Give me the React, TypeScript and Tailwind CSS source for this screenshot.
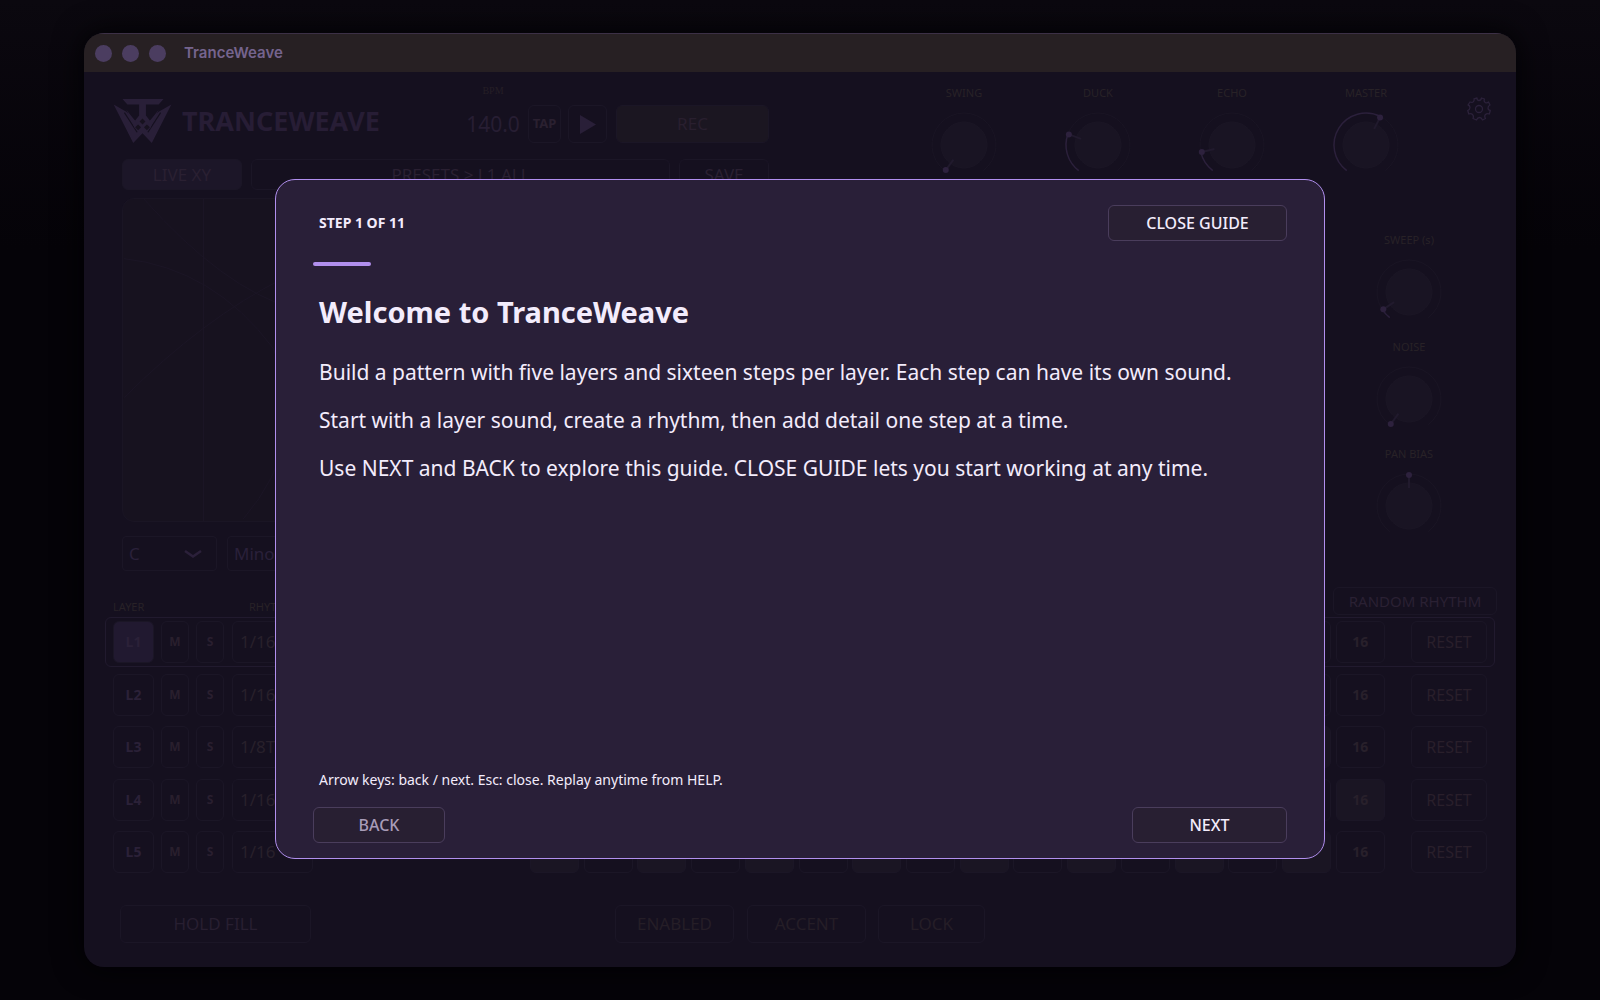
import React, { useEffect, useState } from "react";

const TOTAL_STEPS = 11;

const topKnobs = [
  { label: "SWING", angle: -144 },
  { label: "DUCK", angle: -70 },
  { label: "ECHO", angle: -103 },
  { label: "MASTER", angle: 27 },
];

const sideKnobs = [
  { label: "SWEEP (s)", angle: -124 },
  { label: "NOISE", angle: -144 },
  { label: "PAN BIAS", angle: 0, bipolar: true },
];

const layers = [
  { name: "L1", rate: "1/16", filled: [1, 5, 9, 13] },
  { name: "L2", rate: "1/16", filled: [5, 13] },
  { name: "L3", rate: "1/8T", filled: [3, 7, 11, 15] },
  { name: "L4", rate: "1/16", filled: [4, 8, 12, 16] },
  { name: "L5", rate: "1/16", filled: [1, 3, 5, 7, 9, 11, 13, 15] },
];

const steps = Array.from({ length: 16 }, (_, i) => i + 1);

const point = (angle: number, radius: number) => {
  const rad = ((angle - 90) * Math.PI) / 180;
  return { x: 36 + radius * Math.cos(rad), y: 36 + radius * Math.sin(rad) };
};

const arc = (from: number, to: number, radius: number) => {
  const a = point(from, radius);
  const b = point(to, radius);
  const large = to - from > 180 ? 1 : 0;
  return `M${a.x} ${a.y}A${radius} ${radius} 0 ${large} 1 ${b.x} ${b.y}`;
};

const Knob = ({
  label,
  angle,
  bipolar,
}: {
  label: string;
  angle: number;
  bipolar?: boolean;
}) => {
  const dot = point(angle, 31);
  const inner = point(angle, 18);
  return (
    <div className="flex w-[134px] flex-col items-center gap-[9px]">
      <span className="text-[11px] leading-[14px] text-[#282227]">{label}</span>
      <svg className="size-[72px]" viewBox="0 0 72 72" fill="none">
        <path d={arc(-143, 143, 32)} stroke="#1a1524" />
        <circle cx="36" cy="36" r="23" fill="#191423" stroke="#1b1625" />
        {!bipolar && angle > -143 && (
          <path d={arc(-143, angle, 32)} stroke="#2b203b" strokeWidth="1.5" />
        )}
        <path
          d={`M${inner.x} ${inner.y}L${dot.x} ${dot.y}`}
          stroke="#211a2d"
          strokeWidth="2"
        />
        <circle cx={dot.x} cy={dot.y} r="3" fill="#2d213d" />
      </svg>
    </div>
  );
};

const Logo = () => (
  <svg className="h-11 w-[60px]" viewBox="0 0 60 45" fill="#291f38">
    <path d="M9 0H51L46 5.500H33V17L37 22L46 13L59 5.500L39 45L29.500 35L20 45L0 5.500L13 13L22 22L26 17V5.500H14Z" />
    <path
      d="M11 14L24 34M48 14L35 34"
      stroke="#15101f"
      strokeWidth="1.200"
    />
    <path d="M13 11L24 25L22 31Z M46 11L35 25L37 31Z" />
    <path
      d="M29.500 20L32.500 23L29.500 26L26.500 23Z M25 26L28 29L25 32L22 29Z M34 26L37 29L34 32L31 29Z"
      fill="#17121f"
    />
  </svg>
);

const Gear = () => (
  <svg
    className="size-6"
    viewBox="0 0 24 24"
    fill="none"
    stroke="#2b213a"
    strokeWidth="1.300"
    strokeLinejoin="round"
  >
    <circle cx="12" cy="12" r="3.500" />
    <path d="M10 1Q10 3.500 12 3.500T14.500 1L17.500 2Q16.500 4.500 18.200 5.500T21.500 5L23 8Q21 9 21 11T23.300 13.500L22.300 17Q20 16 18.500 17.500T18.500 21.500L15.500 23Q14.500 20.500 12.500 20.500T9.500 23L6 21.500Q7 19 5.500 17.500T1.800 17L.7 13.500Q3 12.500 3 10.500T1 8L3 5Q5.500 6 6.500 4.500T7 1.800Z" />
  </svg>
);

const Chevron = () => (
  <svg className="h-2 w-[18px]" viewBox="0 0 18 8" fill="none">
    <path d="M1 1L9 6.500L17 1" stroke="#2b203a" strokeWidth="2.500" />
  </svg>
);

const box = "rounded-md border border-[#1b1626]";

const Header = () => (
  <div className="flex justify-between">
    {/* Transport, presets and XY pad */}
    <div className="w-[656px] shrink-0 pt-3">
      <div className="flex items-end">
        <Logo />
        <h1 className="ml-[9px] text-[27px] leading-[44px] font-bold text-[#271d35]">
          TRANCEWEAVE
        </h1>
        <div className="ml-auto flex w-[52px] flex-col items-center gap-[7px]">
          <span className="font-['Liberation_Serif',serif] text-[10px] leading-[14px] text-[#251f26]">
            BPM
          </span>
          <span className="text-[21px] leading-[38px] text-[#271e33]">
            140.0
          </span>
        </div>
        <button
          className={`${box} ml-[9px] h-[38px] w-[33px] text-[13px] font-bold text-[#2a2030]`}
        >
          TAP
        </button>
        <button
          aria-label="Play"
          className={`${box} ml-[7px] flex h-[38px] w-[39px] items-center justify-center`}
        >
          <svg className="h-[19px] w-4" viewBox="0 0 16 19" fill="#291f38">
            <path d="M0 0L16 9.500L0 19Z" />
          </svg>
        </button>
        <button
          className={`${box} ml-[9px] h-[38px] w-[153px] bg-[#1b1621] text-[17px] text-[#291f2f]`}
        >
          REC
        </button>
      </div>

      <div className="mt-4 flex gap-[9px] pl-[9px] text-[17px] text-[#2a2032]">
        <button className={`${box} h-[31px] w-[120px] bg-[#1c1628]`}>
          LIVE XY
        </button>
        <button className={`${box} h-[31px] flex-1`}>
          PRESETS &gt; L1 ALL
        </button>
        <button className={`${box} h-[31px] w-[90px]`}>SAVE</button>
      </div>

      <div className="mt-2 ml-[9px] h-[324px] overflow-hidden rounded-xl border border-[#1a1524] bg-[#17121f]">
        <svg className="h-full w-full" viewBox="0 0 647 324" fill="none" stroke="#1b1525">
          <path d="M0 60Q90 70 150 150Q190 240 120 322M20 0Q100 90 170 110M80 0V324M0 200Q80 120 160 80" />
        </svg>
      </div>

      <div className="mt-[14px] flex gap-[10px] pl-[9px] text-[17px] text-[#2a203a]">
        <button
          className={`${box} flex h-[35px] w-[95px] items-center justify-between rounded-sm pr-[14px] pl-[6px]`}
        >
          C <Chevron />
        </button>
        <button
          className={`${box} flex h-[35px] w-[150px] items-center justify-between rounded-sm px-[6px]`}
        >
          Minor <Chevron />
        </button>
      </div>
    </div>

    {/* Knobs */}
    <div className="flex flex-col items-end pt-[14px]">
      <div className="flex">
        {topKnobs.map((knob) => (
          <Knob key={knob.label} {...knob} />
        ))}
        <button aria-label="Settings" className="mt-[11px] ml-[34px] size-6">
          <Gear />
        </button>
      </div>
      <div className="mt-[52px] mr-[15px] flex flex-col gap-3">
        {sideKnobs.map((knob) => (
          <Knob key={knob.label} {...knob} />
        ))}
      </div>
    </div>
  </div>
);

const Sequencer = () => (
  <div className="mt-4">
    <div className="-mr-[6px] flex h-7 items-end text-[11px] leading-4 text-[#282227]">
      <span className="w-[136px]">LAYER</span>
      <span>RHYTHM</span>
      <button
        className={`${box} ml-auto h-7 w-[164px] text-[15px] text-[#2a2033]`}
      >
        RANDOM RHYTHM
      </button>
    </div>

    <div className="mt-[2px] -mr-1 -ml-2 flex h-[260px] flex-col justify-between">
      {layers.map((layer, index) => (
        <div
          key={layer.name}
          className={`flex h-[50px] items-center rounded-md border px-[7px] font-bold ${
            index === 0 ? "border-[#211a2e]" : "border-transparent"
          }`}
        >
          <button
            className={`${box} h-[42px] w-[41px] rounded-lg text-sm text-[#2b2138] ${
              index === 0 ? "bg-[#211930]" : ""
            }`}
          >
            {layer.name}
          </button>
          <button
            className={`${box} ml-[7px] h-[42px] w-7 rounded-lg text-xs text-[#291f2d]`}
          >
            M
          </button>
          <button
            className={`${box} ml-[7px] h-[42px] w-7 rounded-lg text-xs text-[#291f2f]`}
          >
            S
          </button>
          <button
            className={`${box} ml-2 h-[42px] w-[81px] pl-[7px] text-left text-[17px] font-normal text-[#28202b]`}
          >
            {layer.rate}
          </button>
          <div className="ml-auto flex w-[855px] justify-between">
            {steps.map((step) => (
              <button
                key={step}
                aria-label={`${layer.name} step ${step}`}
                className={`${box} h-[42px] w-[49px] text-sm text-[#28202b] ${
                  layer.filled.includes(step) ? "bg-[#1a1523]" : ""
                }`}
              >
                {step === 16 ? step : null}
              </button>
            ))}
          </div>
          <button
            className={`${box} ml-[26px] h-[42px] w-[76px] text-base font-normal text-[#291f2b]`}
          >
            RESET
          </button>
        </div>
      ))}
    </div>
  </div>
);

const Footer = () => (
  <div className="mt-7 flex h-[38px] pl-[7px] text-[17px] text-[#251e27]">
    <button className={`${box} w-[191px] text-[#281f31]`}>HOLD FILL</button>
    <button className={`${box} ml-[304px] w-[119px]`}>ENABLED</button>
    <button className={`${box} ml-[13px] w-[119px]`}>ACCENT</button>
    <button className={`${box} ml-3 w-[107px]`}>LOCK</button>
  </div>
);

const guideButton =
  "h-9 rounded-md border border-[#4a3d5c] bg-[#281f32] text-base font-medium text-[#f3ecfc] disabled:text-[#a89cb8]";

const Guide = ({ onClose }: { onClose: () => void }) => {
  const [step, setStep] = useState(1);

  // the bar starts at 6% and is full on the last step
  const progress = 6 + ((step - 1) / (TOTAL_STEPS - 1)) * 94;

  useEffect(() => {
    const onKey = (e: KeyboardEvent) => {
      if (e.key === "Escape") onClose();
      if (e.key === "ArrowRight") setStep((s) => Math.min(TOTAL_STEPS, s + 1));
      if (e.key === "ArrowLeft") setStep((s) => Math.max(1, s - 1));
    };
    window.addEventListener("keydown", onKey);
    return () => window.removeEventListener("keydown", onKey);
  }, [onClose]);

  return (
    <div
      role="dialog"
      aria-labelledby="guide-title"
      className="absolute inset-x-[191px] top-[146px] bottom-[108px] flex flex-col rounded-[20px] border border-[#b18fee] bg-[#291f38] px-[37px] pt-[25px] pb-[15px] text-[#f3ecfc]"
    >
      <div className="flex items-center justify-between">
        <span className="pl-[6px] text-sm font-bold">
          STEP {step} OF {TOTAL_STEPS}
        </span>
        <button onClick={onClose} className={`${guideButton} w-[179px]`}>
          CLOSE GUIDE
        </button>
      </div>

      <div className="mt-[21px] h-1">
        <div
          className="h-1 rounded-full bg-[#b18fee]"
          style={{ width: `${progress}%` }}
        />
      </div>

      <div className="flex-1 pl-[6px]">
        <h2 id="guide-title" className="mt-6 text-[29px] leading-[44px] font-bold">
          Welcome to TranceWeave
        </h2>
        <div className="mt-[23px] flex flex-col gap-[18px] text-[21px] leading-[30px]">
          <p>
            Build a pattern with five layers and sixteen steps per layer. Each
            step can have its own sound.
          </p>
          <p>
            Start with a layer sound, create a rhythm, then add detail one step
            at a time.
          </p>
          <p>
            Use NEXT and BACK to explore this guide. CLOSE GUIDE lets you start
            working at any time.
          </p>
        </div>
      </div>

      <p className="pl-[6px] text-sm">
        Arrow keys: back / next. Esc: close. Replay anytime from HELP.
      </p>
      <div className="mt-[17px] flex justify-between">
        <button
          disabled={step === 1}
          onClick={() => setStep(step - 1)}
          className={`${guideButton} w-[132px]`}
        >
          BACK
        </button>
        <button
          onClick={() => setStep(Math.min(TOTAL_STEPS, step + 1))}
          className={`${guideButton} w-[155px]`}
        >
          NEXT
        </button>
      </div>
    </div>
  );
};

const App = () => {
  const [guideOpen, setGuideOpen] = useState(true);

  return (
    <div className="min-h-screen bg-linear-to-b from-[#0b080f] to-[#050308] to-25% px-[84px] py-[33px] font-['Noto_Sans',sans-serif]">
      <div className="relative overflow-hidden rounded-[20px] bg-[#15101f] shadow-[0_0_30px_#020103]">
        <div className="flex h-[39px] items-center gap-[10px] border-t border-[#3c3046] bg-[#272023] pl-[11px]">
          <span className="size-[17px] rounded-full bg-[#4b3d60]"></span>
          <span className="size-[17px] rounded-full bg-[#4b3d60]"></span>
          <span className="size-[17px] rounded-full bg-[#4b3d60]"></span>
          <span className="ml-2 font-['Inter',sans-serif] text-[15px] font-semibold text-[#75648e]">
            TranceWeave
          </span>
        </div>

        <div className="pr-[25px] pb-6 pl-[29px]">
          <Header />
          <Sequencer />
          <Footer />
        </div>

        {guideOpen && <Guide onClose={() => setGuideOpen(false)} />}
      </div>
    </div>
  );
};

export default App;
